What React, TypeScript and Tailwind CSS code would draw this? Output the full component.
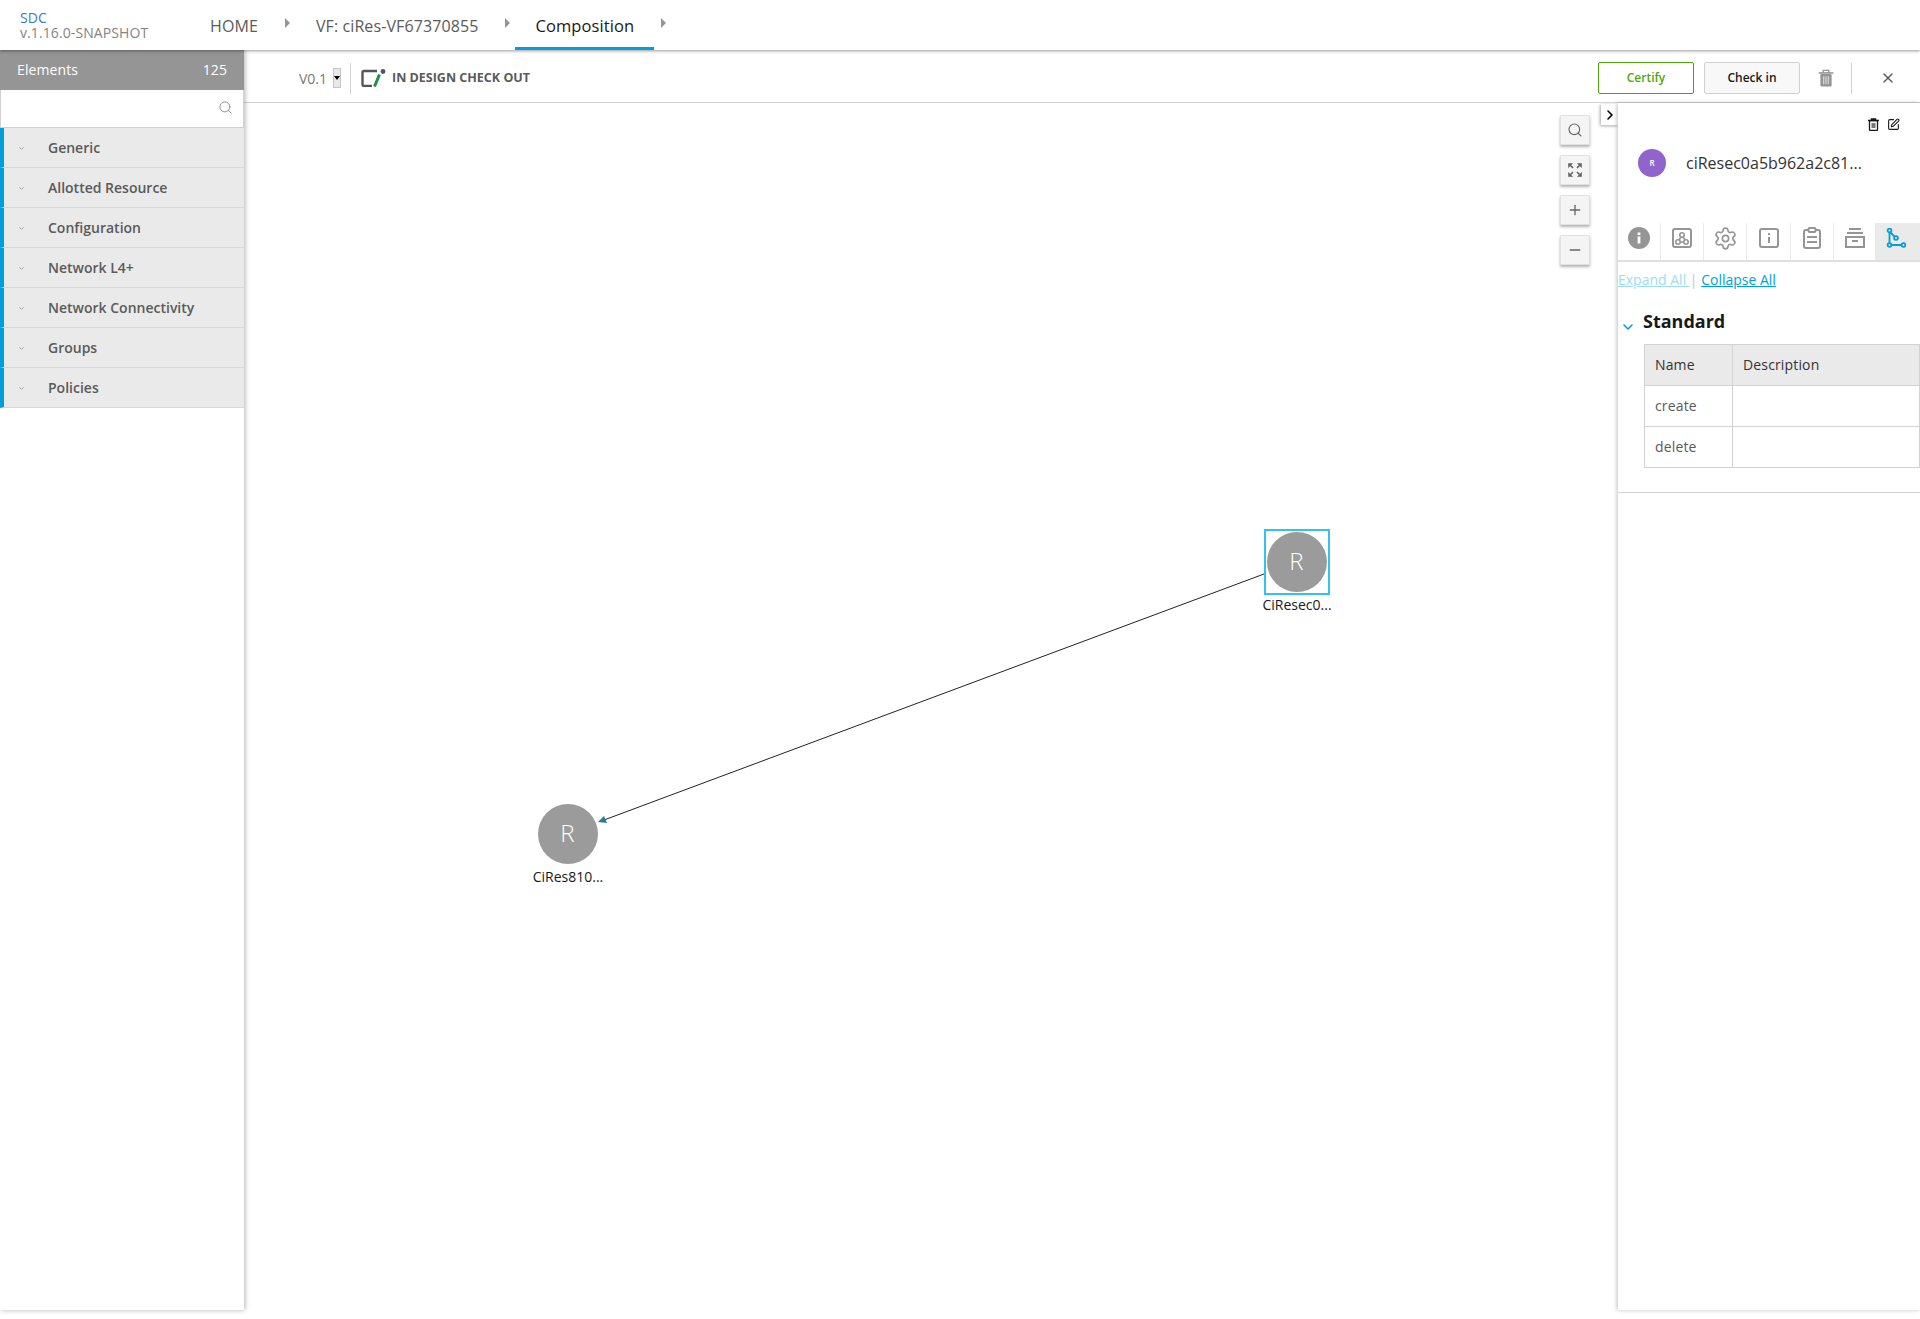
import { Search, X, ChevronRight, ChevronDown, Plus, Minus, SquarePen, Settings } from 'lucide-react';

const CATEGORIES = ['Generic', 'Allotted Resource', 'Configuration', 'Network L4+', 'Network Connectivity', 'Groups', 'Policies'];

function Breadcrumb({ label, active, gap }: { label: string; active?: boolean; gap: string }) {
  return (
    <div className="flex h-full items-center">
      <div className={`relative flex h-full items-center px-5 pt-[2px] tracking-[0.1px] ${active ? 'text-[16.5px] font-medium text-[#191919]' : 'text-[16px] text-[#5a5a5a]'}`}>
        {label}
        {active && <div className="absolute bottom-0 left-0 right-0 h-[3px] bg-[#009fdb]" />}
      </div>
      <div className={`mb-[4px] ml-[7px] h-0 w-0 border-y-[5px] border-l-[5px] border-y-transparent border-l-[#959595] ${gap}`} />
    </div>
  );
}

function TrashIcon({ size, color }: { size: number; color: string }) {
  return (
    <svg width={size} height={size} viewBox="0 0 16 16" fill="none" stroke={color}>
      <path d="M1.5 3.5h13" strokeWidth="1.4" />
      <path d="M5.5 3.5V1.2h5v2.3" strokeWidth="1.2" />
      <rect x="3" y="4.5" width="10" height="11" rx="1" fill={color} stroke="none" />
      <path d="M6 6.5v7M8 6.5v7M10 6.5v7" stroke="#fff" strokeWidth="0.7" />
    </svg>
  );
}

function TopNav() {
  return (
    <header className="relative z-30 flex h-[50px] shrink-0 items-center bg-white shadow-[0_1px_3px_rgba(0,0,0,0.4)]">
      <div className="w-[190px] pl-5 text-[14px] leading-[15px] tracking-[0.1px]">
        <div className="text-[#3b7dbb]">SDC</div>
        <div className="text-[#848484]">v.1.16.0-SNAPSHOT</div>
      </div>
      <Breadcrumb label="HOME" gap="mr-[6px]" />
      <Breadcrumb label="VF: ciRes-VF67370855" gap="mr-[5px]" />
      <Breadcrumb label="Composition" gap="mr-0" active />
    </header>
  );
}

function Sidebar() {
  return (
    <aside className="relative z-20 flex w-[244px] shrink-0 flex-col bg-white shadow-[1px_0_5px_rgba(0,0,0,0.3)]">
      <div className="flex h-[40px] items-center justify-between bg-[#959595] px-[17px] pb-[2px] text-[14px] tracking-[0.1px] text-white">
        <span>Elements</span>
        <span>125</span>
      </div>
      <div className="flex h-[38px] items-center justify-end border-x border-b border-[#d2d2d2] bg-white pb-[2px] pr-[10px]">
        <Search size={15} strokeWidth={1.5} className="text-[#8a8a8a]" />
      </div>
      {CATEGORIES.map((name) => (
        <div
          key={name}
          className="relative flex h-[40px] items-center border-b border-b-[#d8d8d8] border-l-4 border-l-[#009fdb] bg-[#eaeaea] pl-[44px] text-[14px] font-semibold text-[#5a5a5a]"
        >
          <ChevronDown size={7} strokeWidth={3} className="absolute left-[14px] top-[17px] text-[#959595]" />
          {name}
        </div>
      ))}
    </aside>
  );
}

function Toolbar() {
  return (
    <div className="flex h-[53px] shrink-0 items-center border-b border-[#d2d2d2] bg-white pl-[55px] pr-[24px] pt-[4px]">
      <span className="text-[14px] text-[#787878]">V0.1</span>
      <div className="ml-[6px] flex h-[20px] w-[8px] items-center justify-center border border-[#c4c4c4] bg-[#e9e9e9]">
        <div className="h-0 w-0 border-x-[3px] border-t-[4px] border-x-transparent border-t-black" />
      </div>
      <div className="ml-[9px] h-[31px] w-px bg-[#d2d2d2]" />
      <svg width="25" height="18" viewBox="0 0 25 18" className="ml-[10px] shrink-0" fill="none">
        <path d="M16 2H3a1.5 1.5 0 0 0-1.5 1.5v12A1.5 1.5 0 0 0 3 17h8" stroke="#555" strokeWidth="2.4" />
        <path d="M18.5 5.5L13.5 17.5" stroke="#1f8f4f" strokeWidth="3" />
        <circle cx="22" cy="2.5" r="2.4" fill="#555" />
      </svg>
      <span className="ml-[6px] pt-[1px] text-[12.5px] font-bold text-[#5a5a5a]">IN DESIGN CHECK OUT</span>
      <div className="flex-1" />
      <button className="flex h-[32px] w-[96px] items-center justify-center rounded-[2px] border border-[#4ca90c] text-[12px] font-semibold text-[#4ca90c]">
        Certify
      </button>
      <button className="ml-[10px] flex h-[32px] w-[96px] items-center justify-center rounded-[2px] border border-[#d2d2d2] bg-[#f8f8f8] text-[12px] font-semibold text-[#191919]">
        Check in
      </button>
      <div className="ml-[17px]">
        <TrashIcon size={18} color="#959595" />
      </div>
      <div className="ml-[16px] h-[31px] w-px bg-[#d2d2d2]" />
      <X size={16} strokeWidth={2} className="ml-[28px] text-[#5a5a5a]" />
    </div>
  );
}

function CanvasButton({ children }: { children: React.ReactNode }) {
  return (
    <button className="flex h-[30px] w-[30px] items-center justify-center rounded-[1px] border border-[#e0e0e0] bg-[#f4f4f4] text-[#666] shadow-[0_2px_3px_rgba(0,0,0,0.3)]">
      {children}
    </button>
  );
}

function CanvasNode({ label, x, y, selected }: { label: string; x: number; y: number; selected?: boolean }) {
  return (
    <div className="absolute flex w-[80px] flex-col items-center" style={{ left: x, top: y }}>
      <div className={`flex h-[66px] w-[66px] items-center justify-center ${selected ? 'border-2 border-[#35c0f5]' : ''}`}>
        <div className="flex h-[60px] w-[60px] items-center justify-center rounded-full bg-[#9b9b9b] pb-[2px] pr-[1px] text-[24px] font-light text-white">R</div>
      </div>
      <div className="whitespace-nowrap text-[14px] leading-[20px] text-[#191919]">{label}</div>
    </div>
  );
}

function Canvas() {
  return (
    <div className="relative flex-1 overflow-hidden bg-white">
      <svg className="absolute inset-0 h-full w-full">
        <line x1="1020" y1="471" x2="360" y2="717" stroke="#222" strokeWidth="1" />
        <polygon points="354,719 360,713 363,720" fill="#2f7a9a" />
      </svg>
      <CanvasNode label="CiResec0..." x={1013} y={426} selected />
      <CanvasNode label="CiRes810..." x={284} y={698} />
      <div className="absolute right-[28px] top-[12px] flex flex-col gap-[10px]">
        <CanvasButton><Search size={16} strokeWidth={1.7} /></CanvasButton>
        <CanvasButton>
          <svg width="14" height="14" viewBox="0 0 14 14" fill="#666" stroke="#666">
            <path d="M0.5 0.5h4l-4 4zM13.5 0.5h-4l4 4zM0.5 13.5h4l-4-4zM13.5 13.5h-4l4-4z" strokeWidth="0.6" />
            <path d="M2 2l3 3M12 2l-3 3M2 12l3-3M12 12l-3-3" strokeWidth="1.6" />
          </svg>
        </CanvasButton>
        <CanvasButton><Plus size={16} strokeWidth={2} /></CanvasButton>
        <CanvasButton><Minus size={16} strokeWidth={2.4} /></CanvasButton>
      </div>
      <div className="absolute right-0 top-[1px] flex h-[21px] w-[17px] items-center justify-center bg-white shadow-[-1px_1px_3px_rgba(0,0,0,0.35)]">
        <ChevronRight size={16} strokeWidth={2.4} className="text-black" />
      </div>
    </div>
  );
}

function PanelTab({ children, width, active, last }: { children: React.ReactNode; width: string; active?: boolean; last?: boolean }) {
  return (
    <div className={`flex h-full shrink-0 items-center justify-center pb-[7px] ${width} ${last ? 'pr-[4px]' : 'border-r border-[#eaeaea]'} ${active ? 'bg-[#eaeaea]' : ''}`}>
      {children}
    </div>
  );
}

function RightPanel() {
  const gray = '#959595';
  return (
    <aside className="relative z-10 flex w-[302px] shrink-0 flex-col bg-white shadow-[-1px_0_4px_rgba(0,0,0,0.25)]">
      <div className="relative h-[120px] shrink-0">
        <div className="absolute right-[20px] top-[15px] flex gap-[7px] text-[#191919]">
          <svg width="13" height="13" viewBox="0 0 13 13" fill="none" stroke="#191919" strokeWidth="1.3">
            <path d="M1 2.5h11M4.5 2.5V1h4v1.5" />
            <rect x="2.5" y="2.5" width="8" height="10" rx="1" />
            <rect x="4.5" y="5" width="4" height="5" fill="#777" stroke="none" />
          </svg>
          <SquarePen size={13} strokeWidth={2} />
        </div>
        <div className="absolute left-[20px] top-[46px] flex h-[28px] w-[28px] items-center justify-center rounded-full bg-[#9063cd] text-[8px] font-semibold text-white">R</div>
        <div className="absolute left-[68px] top-[49px] text-[16px] leading-[22px] text-[#333]">ciResec0a5b962a2c81...</div>
      </div>
      <div className="flex h-[39px] shrink-0 items-stretch border-b-2 border-[#e0e0e0]">
        <PanelTab width="w-[43px]">
          <svg width="22" height="22" viewBox="0 0 22 22"><circle cx="11" cy="11" r="11" fill={gray} /><rect x="9.6" y="9.5" width="2.8" height="7" fill="#fff" /><rect x="9.6" y="5.5" width="2.8" height="2.6" fill="#fff" /></svg>
        </PanelTab>
        <PanelTab width="w-[43px]">
          <svg width="20" height="20" viewBox="0 0 20 20" fill="none" stroke={gray} strokeWidth="2">
            <rect x="1" y="1" width="18" height="18" rx="2" />
            <circle cx="10" cy="7" r="2.2" strokeWidth="1.6" /><circle cx="6" cy="14" r="2.2" strokeWidth="1.6" /><circle cx="14" cy="14" r="2.2" strokeWidth="1.6" />
            <path d="M9 9l-2 3M11 9l2 3M8 14h4" strokeWidth="1.6" />
          </svg>
        </PanelTab>
        <PanelTab width="w-[43px]"><Settings size={25} strokeWidth={1.6} color={gray} /></PanelTab>
        <PanelTab width="w-[44px]">
          <svg width="20" height="20" viewBox="0 0 20 20" fill="none" stroke={gray} strokeWidth="2">
            <rect x="1" y="1" width="18" height="18" rx="2" />
            <path d="M10 9v6" /><path d="M10 5v2" />
          </svg>
        </PanelTab>
        <PanelTab width="w-[43px]">
          <svg width="18" height="22" viewBox="0 0 18 22" fill="none" stroke={gray} strokeWidth="2">
            <rect x="1" y="3" width="16" height="18" rx="2" />
            <rect x="5.5" y="1" width="7" height="4" rx="1" fill="#fff" />
            <path d="M4 10h10M4 15h10" />
          </svg>
        </PanelTab>
        <PanelTab width="w-[42px]">
          <svg width="20" height="20" viewBox="0 0 20 20" fill="none" stroke={gray} strokeWidth="2">
            <path d="M4 1h12M2 5h16" />
            <rect x="1" y="9" width="18" height="10" />
            <path d="M7 13h6" />
          </svg>
        </PanelTab>
        <PanelTab width="w-[44px]" active last>
          <svg width="20" height="20" viewBox="0 0 20 20" fill="none" stroke="#009fdb" strokeWidth="1.8">
            <circle cx="3.5" cy="2.5" r="1.9" /><circle cx="10" cy="10" r="1.9" /><circle cx="3.5" cy="17" r="1.9" /><circle cx="17.5" cy="17" r="1.9" />
            <path d="M3.5 4.5v10.5M5.5 17h10M4.5 4.5l4 4" />
          </svg>
        </PanelTab>
      </div>
      <div className="mt-[8px] text-[14px] leading-[20px]">
        <span className="text-[#9ddcf5] underline">Expand All </span>
        <span className="text-[#c4c4c4]"> | </span>
        <span className="text-[#009fdb] underline">Collapse All</span>
      </div>
      <div className="relative mt-[19px] pl-[25px] text-[18px] font-bold leading-[24px] text-[#191919]">
        <ChevronDown size={16} strokeWidth={2.4} className="absolute left-[2px] top-[10px] text-[#009fdb]" />
        Standard
      </div>
      <div className="ml-[26px] mt-[11px] border-l border-r border-t border-[#d2d2d2] text-[14px] tracking-[0.15px]">
        <div className="flex h-[41px] border-b border-[#d2d2d2] bg-[#eaeaea] text-[#333]">
          <div className="flex w-[88px] items-center border-r border-[#d2d2d2] pb-[2px] pl-[10px]">Name</div>
          <div className="flex flex-1 items-center pb-[2px] pl-[10px]">Description</div>
        </div>
        <div className="flex h-[41px] border-b border-[#d2d2d2] text-[#5a5a5a]">
          <div className="flex w-[88px] items-center border-r border-[#d2d2d2] pb-[2px] pl-[10px]">create</div>
          <div className="flex-1" />
        </div>
        <div className="flex h-[41px] border-b border-[#d2d2d2] text-[#5a5a5a]">
          <div className="flex w-[88px] items-center border-r border-[#d2d2d2] pb-[2px] pl-[10px]">delete</div>
          <div className="flex-1" />
        </div>
      </div>
      <div className="mt-[24px] border-b border-[#d2d2d2]" />
    </aside>
  );
}

export default function App() {
  return (
    <div className="flex h-[1319px] w-[1920px] flex-col overflow-hidden bg-white font-['Open_Sans',sans-serif]">
      <TopNav />
      <div className="flex h-[1260px] shrink-0">
        <Sidebar />
        <div className="flex min-w-0 flex-1 flex-col">
          <Toolbar />
          <div className="flex min-h-0 flex-1">
            <Canvas />
            <RightPanel />
          </div>
        </div>
      </div>
    </div>
  );
}
